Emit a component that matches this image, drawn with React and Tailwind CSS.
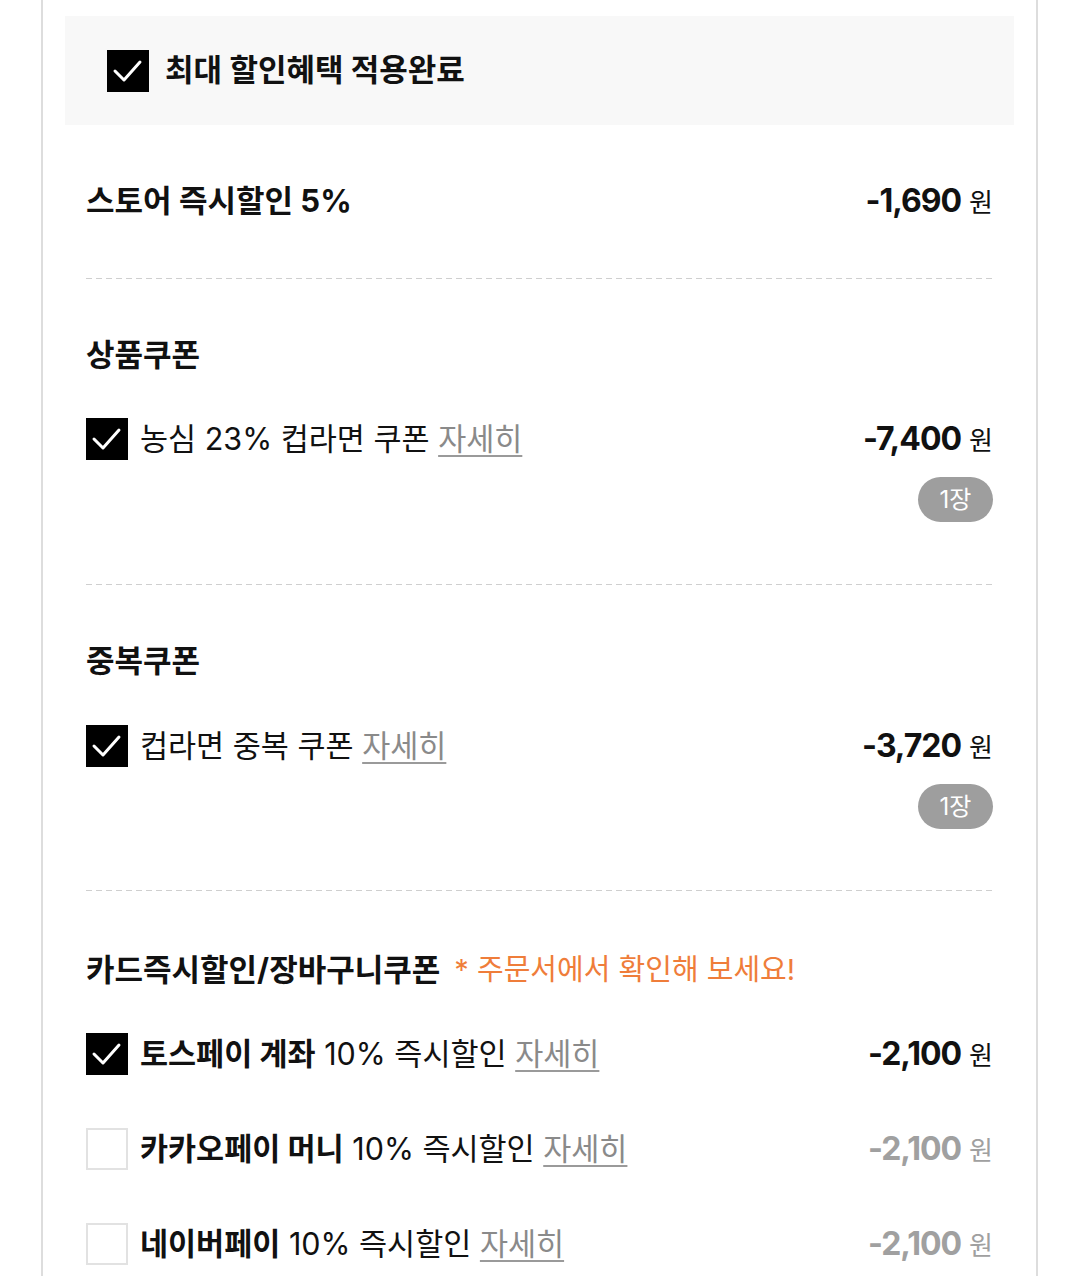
import React from 'react';

const FONT = "font-['Inter','Noto_Sans_CJK_KR',sans-serif]";

function Check({ on }) {
  if (!on) {
    return <div className="w-[42px] h-[42px] shrink-0 border-2 border-[#e2e2e2] bg-white" />;
  }
  return (
    <div className="w-[42px] h-[42px] shrink-0 bg-black flex items-center justify-center">
      <svg width="42" height="42" viewBox="0 0 42 42" fill="none">
        <polyline points="8,21 17,30 33,12" stroke="#fff" strokeWidth="3" strokeLinecap="round" strokeLinejoin="round" />
      </svg>
    </div>
  );
}

function Dashed() {
  return <div className="mx-[43px] h-px bg-[repeating-linear-gradient(90deg,#cfcfcf_0_6px,transparent_6px_10px)]" />;
}

function Amount({ value, muted }) {
  return (
    <div className={`flex items-baseline gap-[8px] ${muted ? 'text-[#a0a0a0]' : 'text-[#111]'}`}>
      <span className="text-[32px] font-bold tracking-[-1px]">{value}</span>
      <span className="text-[26px] font-normal">원</span>
    </div>
  );
}

function Detail() {
  return <span className="text-[#8a8a8a] underline underline-offset-[5px] decoration-[2px] decoration-[#9a9a9a]">자세히</span>;
}

function CouponRow({ children, amount }) {
  return (
    <div className="flex justify-between items-start">
      <div className="flex items-center gap-[12px] h-[42px]">
        <Check on />
        <span className="text-[30.5px] text-[#111] leading-[42px]">{children}</span>
      </div>
      <div className="flex flex-col items-end">
        <div className="h-[42px] flex items-center">
          <Amount value={amount} />
        </div>
        <div className="mt-[17px] h-[45px] w-[75px] rounded-full bg-[#9e9e9e] text-white text-[24px] flex items-center justify-center">1장</div>
      </div>
    </div>
  );
}

function CardRow({ on, brand, amount }) {
  return (
    <div className="flex justify-between items-center h-[42px]">
      <div className="flex items-center gap-[12px]">
        <Check on={on} />
        <span className="text-[30.5px] text-[#111] leading-[42px]">
          <b className="font-bold">{brand}</b> 10% 즉시할인 <Detail />
        </span>
      </div>
      <Amount value={amount} muted={!on} />
    </div>
  );
}

export default function App() {
  return (
    <div className={`w-[1080px] h-[1276px] bg-white overflow-hidden ${FONT}`}>
      <div className="ml-[41px] w-[997px] h-full border-x-2 border-[#dddddd] pt-[16px]">
        <div className="mx-[22px] h-[109px] bg-[#f8f8f8] flex items-center pl-[42px] gap-[16px]">
          <Check on />
          <span className="text-[31px] font-bold text-[#111]">최대 할인혜택 적용완료</span>
        </div>

        <div className="px-[43px] pt-[56px] pb-[57px] flex justify-between items-center h-[153px]">
          <span className="text-[31px] font-bold text-[#111]">스토어 즉시할인 5%</span>
          <Amount value="-1,690" />
        </div>
        <Dashed />

        <div className="px-[43px] pt-[56px] pb-[62px]">
          <div className="h-[40px] flex items-center text-[31px] font-bold text-[#111]">상품쿠폰</div>
          <div className="mt-[43px]">
            <CouponRow amount="-7,400">
              농심 23% 컵라면 쿠폰 <Detail />
            </CouponRow>
          </div>
        </div>
        <Dashed />

        <div className="px-[43px] pt-[56px] pb-[61px]">
          <div className="h-[40px] flex items-center text-[31px] font-bold text-[#111]">중복쿠폰</div>
          <div className="mt-[44px]">
            <CouponRow amount="-3,720">
              컵라면 중복 쿠폰 <Detail />
            </CouponRow>
          </div>
        </div>
        <Dashed />

        <div className="px-[43px] pt-[59px]">
          <div className="h-[40px] flex items-center gap-[14px]">
            <span className="text-[31px] font-bold text-[#111]">카드즉시할인/장바구니쿠폰</span>
            <span className="text-[29px] text-[#ef7d3a]">* 주문서에서 확인해 보세요!</span>
          </div>
          <div className="mt-[43px] flex flex-col gap-[53px]">
            <CardRow on brand="토스페이 계좌" amount="-2,100" />
            <CardRow brand="카카오페이 머니" amount="-2,100" />
            <CardRow brand="네이버페이" amount="-2,100" />
          </div>
        </div>
      </div>
    </div>
  );
}
